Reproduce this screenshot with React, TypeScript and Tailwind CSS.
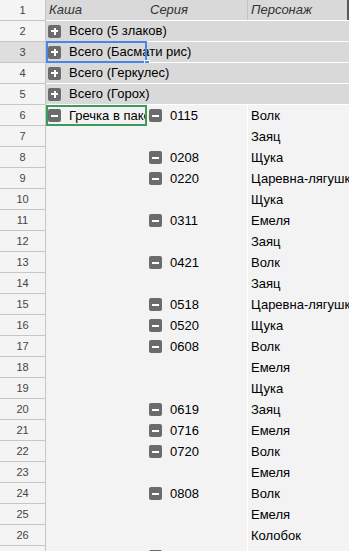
import React from 'react';

type Row = { a?: string; b?: string; c?: string };

const groupRows = ['Всего (5 злаков)', 'Всего (Басмати рис)', 'Всего (Геркулес)', 'Всего (Горох)'];

const dataRows: Row[] = [
  { a: 'Гречка в пакетиках', b: '0115', c: 'Волк' },
  { c: 'Заяц' },
  { b: '0208', c: 'Щука' },
  { b: '0220', c: 'Царевна-лягушка' },
  { c: 'Щука' },
  { b: '0311', c: 'Емеля' },
  { c: 'Заяц' },
  { b: '0421', c: 'Волк' },
  { c: 'Заяц' },
  { b: '0518', c: 'Царевна-лягушка' },
  { b: '0520', c: 'Щука' },
  { b: '0608', c: 'Волк' },
  { c: 'Емеля' },
  { c: 'Щука' },
  { b: '0619', c: 'Заяц' },
  { b: '0716', c: 'Емеля' },
  { b: '0720', c: 'Волк' },
  { c: 'Емеля' },
  { b: '0808', c: 'Волк' },
  { c: 'Емеля' },
  { c: 'Колобок' },
  { b: '0901', c: 'Волк' },
];

function Toggle({ open }: { open: boolean }) {
  return (
    <span className="w-[13px] h-[13px] shrink-0 rounded-[2px] bg-[#6b6b6b] relative">
      <span className="absolute left-[3px] top-[5.5px] w-[7px] h-[2px] bg-white" />
      {!open && <span className="absolute left-[5.5px] top-[3px] w-[2px] h-[7px] bg-white" />}
    </span>
  );
}

function RowNum({ n, active }: { n: number; active?: boolean }) {
  return (
    <div
      className={`w-[46px] shrink-0 border-r border-b border-[#c6c6c6] flex items-center justify-center text-[11px] text-[#444] ${
        active ? 'bg-[#dedede]' : 'bg-[#f4f4f4]'
      }`}
    >
      {n}
    </div>
  );
}

export default function App() {
  return (
    <div
      className="w-[349px] h-[551px] overflow-hidden bg-[#f3f3f3] text-[13px] text-black"
      style={{ fontFamily: '"Liberation Sans", Arial, sans-serif' }}
    >
      {/* Header row */}
      <div className="flex h-[21px]">
        <RowNum n={1} />
        <div className="flex-1 flex bg-[#d9d9d9] border-b border-white italic text-[#333]">
          <div className="w-[101px] pl-[3px] flex items-center">Каша</div>
          <div className="w-[101px] pl-[3px] flex items-center border-r border-[#c4c4c4]">Серия</div>
          <div className="flex-1 pl-[3px] flex items-center">Персонаж</div>
          <div className="w-[2px] bg-[#5a5a5a]" />
        </div>
      </div>

      {/* Collapsed groups */}
      {groupRows.map((label, i) => (
        <div key={label} className="flex h-[21px]">
          <RowNum n={i + 2} active={i === 1} />
          <div className="flex-1 bg-[#d9d9d9] border-b border-white flex items-center relative whitespace-nowrap">
            <div className="pl-[2px] flex items-center gap-[8px]">
              <Toggle open={false} />
              <span>{label}</span>
            </div>
            {i === 1 && (
              <div className="absolute left-0 top-[-1px] w-[101px] h-[22px] border-2 border-[#4a86e8]">
                <div className="absolute right-[-5px] bottom-[-5px] w-[6px] h-[6px] bg-[#4a86e8] border border-white" />
              </div>
            )}
          </div>
        </div>
      ))}

      {/* Expanded group */}
      {dataRows.map((r, i) => (
        <div key={i} className="flex h-[21px]">
          <RowNum n={i + 6} />
          <div className="w-[101px] shrink-0 relative overflow-hidden whitespace-nowrap">
            {r.a && (
              <div className="h-full flex items-center gap-[8px] border-2 border-[#3a9b5c] overflow-hidden">
                <Toggle open />
                <span className="overflow-hidden">{r.a}</span>
              </div>
            )}
          </div>
          <div className="w-[101px] shrink-0 border-r border-white flex items-center pl-[2px] gap-[8px]">
            {r.b && (
              <>
                <Toggle open />
                <span>{r.b}</span>
              </>
            )}
          </div>
          <div className="flex-1 overflow-hidden whitespace-nowrap flex items-center pl-[3px]">{r.c}</div>
        </div>
      ))}
    </div>
  );
}
